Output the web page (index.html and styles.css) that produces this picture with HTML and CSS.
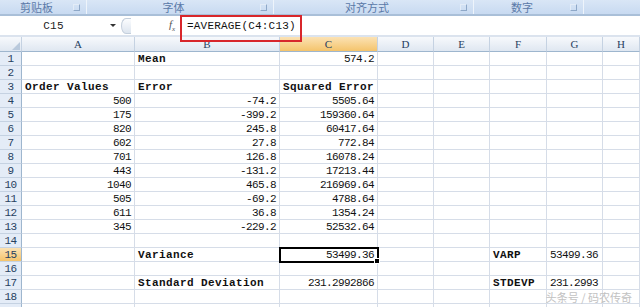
FILE: index.html
```html
<!DOCTYPE html>
<html>
<head>
<meta charset="utf-8">
<link rel="stylesheet" href="styles.css">
</head>
<body>
<div class="app">
  <div class="ribbon">
    <div class="group g1"><span class="glabel">剪贴板</span><span class="launch"></span></div>
    <div class="group g2"><span class="glabel">字体</span><span class="launch"></span></div>
    <div class="group g3"><span class="glabel">对齐方式</span><span class="launch"></span></div>
    <div class="group g4"><span class="glabel">数字</span><span class="launch"></span></div>
    <div class="group g5"></div>
  </div>
  <div class="fbar">
    <div class="namebox">C15</div>
    <div class="ddarrow"></div>
    <div class="handle"></div>
    <div class="fx">f<sub>x</sub></div>
    <div class="formula">=AVERAGE(C4:C13)</div>
    <div class="redbox"></div>
  </div>
  <div class="sheet">
    <div class="hd corner"><svg width="10" height="10" viewBox="0 0 10 10"><path d="M9 1 L9 9 L1 9 Z" fill="#b9c9dc"/></svg></div>
    <div class="hd">A</div><div class="hd">B</div><div class="hd sel">C</div><div class="hd">D</div><div class="hd">E</div><div class="hd">F</div><div class="hd">G</div><div class="hd">H</div>

    <div class="rn">1</div><div class="c"></div><div class="c b">Mean</div><div class="c r">574.2</div><div class="c"></div><div class="c"></div><div class="c"></div><div class="c"></div><div class="c"></div>
    <div class="rn">2</div><div class="c"></div><div class="c"></div><div class="c"></div><div class="c"></div><div class="c"></div><div class="c"></div><div class="c"></div><div class="c"></div>
    <div class="rn">3</div><div class="c b">Order Values</div><div class="c b">Error</div><div class="c b">Squared Error</div><div class="c"></div><div class="c"></div><div class="c"></div><div class="c"></div><div class="c"></div>
    <div class="rn">4</div><div class="c r">500</div><div class="c r">-74.2</div><div class="c r">5505.64</div><div class="c"></div><div class="c"></div><div class="c"></div><div class="c"></div><div class="c"></div>
    <div class="rn">5</div><div class="c r">175</div><div class="c r">-399.2</div><div class="c r">159360.64</div><div class="c"></div><div class="c"></div><div class="c"></div><div class="c"></div><div class="c"></div>
    <div class="rn">6</div><div class="c r">820</div><div class="c r">245.8</div><div class="c r">60417.64</div><div class="c"></div><div class="c"></div><div class="c"></div><div class="c"></div><div class="c"></div>
    <div class="rn">7</div><div class="c r">602</div><div class="c r">27.8</div><div class="c r">772.84</div><div class="c"></div><div class="c"></div><div class="c"></div><div class="c"></div><div class="c"></div>
    <div class="rn">8</div><div class="c r">701</div><div class="c r">126.8</div><div class="c r">16078.24</div><div class="c"></div><div class="c"></div><div class="c"></div><div class="c"></div><div class="c"></div>
    <div class="rn">9</div><div class="c r">443</div><div class="c r">-131.2</div><div class="c r">17213.44</div><div class="c"></div><div class="c"></div><div class="c"></div><div class="c"></div><div class="c"></div>
    <div class="rn">10</div><div class="c r">1040</div><div class="c r">465.8</div><div class="c r">216969.64</div><div class="c"></div><div class="c"></div><div class="c"></div><div class="c"></div><div class="c"></div>
    <div class="rn">11</div><div class="c r">505</div><div class="c r">-69.2</div><div class="c r">4788.64</div><div class="c"></div><div class="c"></div><div class="c"></div><div class="c"></div><div class="c"></div>
    <div class="rn">12</div><div class="c r">611</div><div class="c r">36.8</div><div class="c r">1354.24</div><div class="c"></div><div class="c"></div><div class="c"></div><div class="c"></div><div class="c"></div>
    <div class="rn">13</div><div class="c r">345</div><div class="c r">-229.2</div><div class="c r">52532.64</div><div class="c"></div><div class="c"></div><div class="c"></div><div class="c"></div><div class="c"></div>
    <div class="rn">14</div><div class="c"></div><div class="c"></div><div class="c"></div><div class="c"></div><div class="c"></div><div class="c"></div><div class="c"></div><div class="c"></div>
    <div class="rn sel">15</div><div class="c"></div><div class="c b">Variance</div><div class="c r active">53499.36</div><div class="c"></div><div class="c"></div><div class="c b">VARP</div><div class="c">53499.36</div><div class="c"></div>
    <div class="rn">16</div><div class="c"></div><div class="c"></div><div class="c"></div><div class="c"></div><div class="c"></div><div class="c"></div><div class="c"></div><div class="c"></div>
    <div class="rn">17</div><div class="c"></div><div class="c b">Standard Deviation</div><div class="c r">231.2992866</div><div class="c"></div><div class="c"></div><div class="c b">STDEVP</div><div class="c">231.2993</div><div class="c"></div>
    <div class="rn">18</div><div class="c"></div><div class="c"></div><div class="c"></div><div class="c"></div><div class="c"></div><div class="c"></div><div class="c"></div><div class="c"></div>
    <div class="rn"></div><div class="c"></div><div class="c"></div><div class="c"></div><div class="c"></div><div class="c"></div><div class="c"></div><div class="c"></div><div class="c"></div>
  </div>
  <div class="watermark">头条号 / 码农传奇</div>
</div>
</body>
</html>
```
FILE: styles.css
```css
html, body {
  margin: 0;
  padding: 0;
  background: #ffffff;
}
.app {
  position: relative;
  width: 640px;
  height: 307px;
  overflow: hidden;
  font-family: "Liberation Mono", "DejaVu Sans Mono", monospace;
}
.ribbon {
  display: flex;
  height: 14px;
  background: linear-gradient(#d9e6f6, #c8daf1);
  border-bottom: 2px solid #a9bfd8;
}
.group {
  display: flex;
  align-items: center;
  border-right: 1px solid #eef4fb;
  box-sizing: border-box;
}
.g1 { width: 87px; }
.g2 { width: 187px; }
.g3 { width: 200px; }
.g4 { width: 110px; }
.g5 { flex: 1; border-right: none; }
.glabel {
  flex: 1;
  text-align: center;
  font-family: "Noto Sans CJK SC", sans-serif;
  font-size: 11px;
  line-height: 14px;
  color: #5a79a8;
}
.launch {
  width: 5px;
  height: 5px;
  margin-right: 6px;
  border: 1px solid #8ea8c8;
  border-left-color: #e3ecf7;
  border-top-color: #e3ecf7;
}
.fbar {
  position: relative;
  display: flex;
  align-items: center;
  height: 19px;
  background: #ffffff;
  border-bottom: 2px solid #dbe3ee;
}
.namebox {
  width: 107px;
  text-align: center;
  font-family: "Liberation Mono", monospace;
  font-size: 11px;
  letter-spacing: 0.2px;
  color: #222;
}
.ddarrow {
  width: 0;
  height: 0;
  border-left: 3px solid transparent;
  border-right: 3px solid transparent;
  border-top: 3px solid #333;
  margin-left: 3px;
}
.handle {
  width: 9px;
  height: 14px;
  margin-left: 5px;
  border-radius: 50% 0 0 50%;
  border: 1px solid #c4cfdc;
  border-right: none;
  background: linear-gradient(#fbfcfe, #dde5ef);
}
.fx {
  margin-left: 38px;
  width: 12px;
  font-family: "Liberation Serif", serif;
  font-style: italic;
  font-size: 11px;
  color: #555;
}
.fx sub {
  font-size: 7px;
}
.formula {
  margin-left: 6px;
  font-family: "Liberation Mono", monospace;
  font-size: 11px;
  letter-spacing: 0.2px;
  color: #111;
}
.redbox {
  position: absolute;
  left: 180px;
  top: -1px;
  width: 118px;
  height: 23px;
  border: 2px solid #d8262b;
}
.sheet {
  display: grid;
  grid-template-columns: 22px 113px 145px 98px 56px 56px 57px 56px 37px;
  grid-template-rows: 15px repeat(19, 14px);
}
.hd {
  box-sizing: border-box;
  border-right: 1px solid #c5d2e2;
  border-bottom: 1px solid #9eb6ce;
  background: linear-gradient(#f7f9fc, #dfe7f1);
  text-align: center;
  font-family: "Liberation Serif", serif;
  font-size: 11px;
  line-height: 14px;
  color: #27415f;
}
.hd.sel {
  background: linear-gradient(#fbe2b4, #f4c46c);
}
.corner {
  display: flex;
  align-items: flex-end;
  justify-content: flex-end;
}
.rn {
  box-sizing: border-box;
  background: #e4ecf7;
  border-right: 1px solid #9eb6ce;
  border-bottom: 1px solid #c5d2e2;
  text-align: center;
  font-family: "Liberation Mono", monospace;
  font-size: 11px;
  letter-spacing: -0.6px;
  line-height: 14px;
  color: #27415f;
}
.rn.sel {
  background: linear-gradient(#fbe2b4, #f4c46c);
}
.c {
  position: relative;
  box-sizing: border-box;
  border-right: 1px solid #d6dde8;
  border-bottom: 1px solid #d6dde8;
  padding: 0 3px;
  font-size: 11px;
  letter-spacing: -0.6px;
  line-height: 14px;
  color: #111;
  white-space: nowrap;
}
.c.r {
  text-align: right;
}
.c.b {
  font-weight: bold;
  letter-spacing: 0.4px;
}
.c.active {
  outline: 2px solid #000;
  outline-offset: -1px;
  z-index: 1;
}
.c.active::after {
  content: "";
  position: absolute;
  right: -3px;
  bottom: -3px;
  width: 4px;
  height: 4px;
  background: #000;
  border: 1px solid #fff;
}
.watermark {
  position: absolute;
  right: 8px;
  bottom: 2px;
  font-family: "Noto Sans CJK SC", sans-serif;
  font-size: 11px;
  color: #c2c2c2;
}
```
